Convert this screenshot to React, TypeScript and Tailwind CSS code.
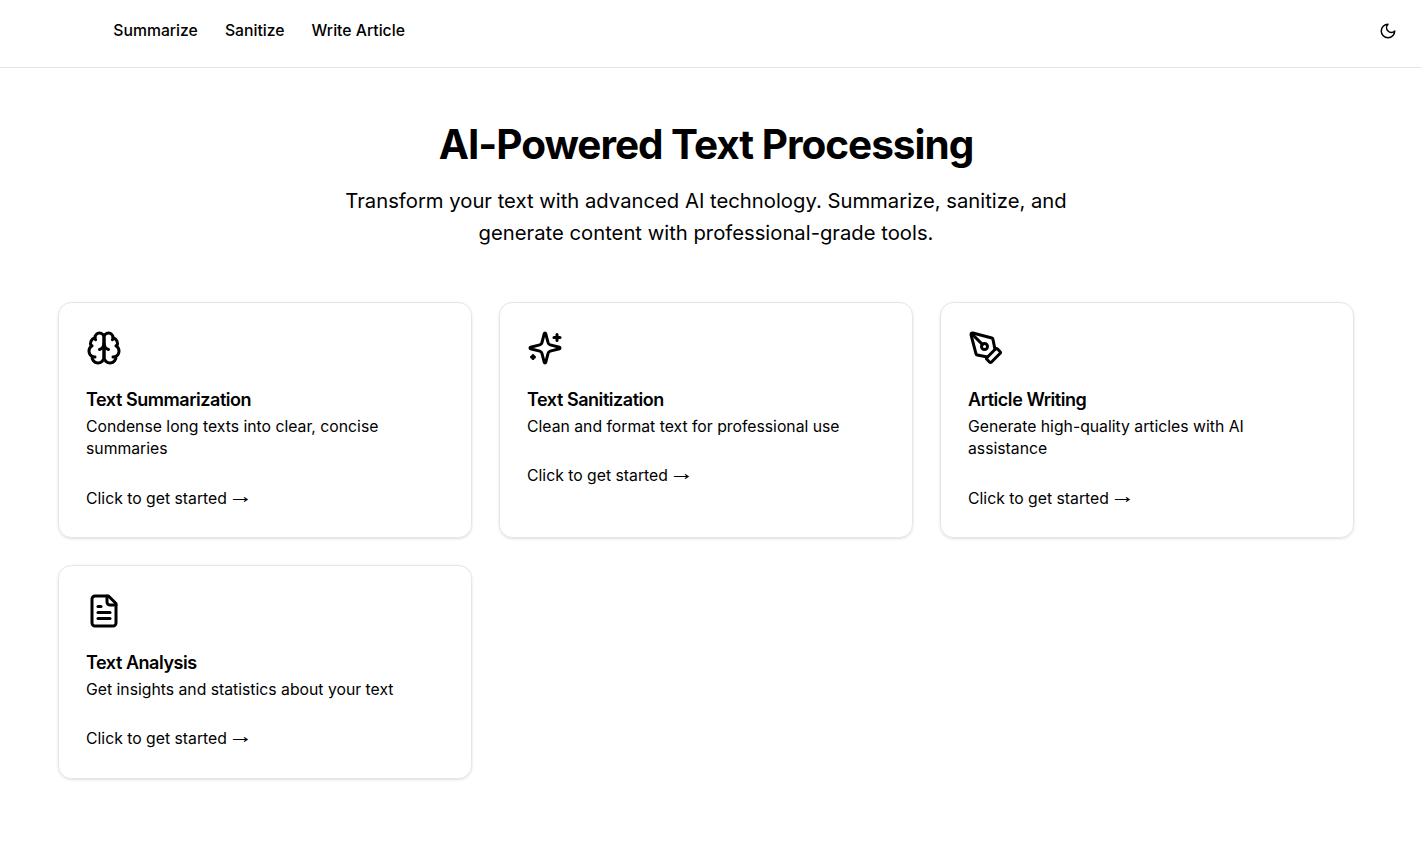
import React from "react";

const iconProps = {
  viewBox: "0 0 24 24",
  fill: "none",
  stroke: "currentColor",
  strokeWidth: 2,
  strokeLinecap: "round" as const,
  strokeLinejoin: "round" as const,
};

function BrainIcon({ className }: { className?: string }) {
  return (
    <svg {...iconProps} className={className}>
      <path d="M12 5a3 3 0 1 0-5.997.125 4 4 0 0 0-2.526 5.77 4 4 0 0 0 .556 6.588A4 4 0 1 0 12 18Z" />
      <path d="M12 5a3 3 0 1 1 5.997.125 4 4 0 0 1 2.526 5.77 4 4 0 0 1-.556 6.588A4 4 0 1 1 12 18Z" />
      <path d="M15 13a4.5 4.5 0 0 1-3-4 4.5 4.5 0 0 1-3 4" />
      <path d="M17.599 6.5a3 3 0 0 0 .399-1.375" />
      <path d="M6.003 5.125A3 3 0 0 0 6.401 6.5" />
      <path d="M3.477 10.896a4 4 0 0 1 .585-.396" />
      <path d="M19.938 10.5a4 4 0 0 1 .585.396" />
      <path d="M6 18a4 4 0 0 1-1.967-.516" />
      <path d="M19.967 17.484A4 4 0 0 1 18 18" />
    </svg>
  );
}

function SparklesIcon({ className }: { className?: string }) {
  return (
    <svg {...iconProps} className={className}>
      <path d="M9.937 15.5A2 2 0 0 0 8.5 14.063l-6.135-1.582a.5.5 0 0 1 0-.962L8.5 9.936A2 2 0 0 0 9.937 8.5l1.582-6.135a.5.5 0 0 1 .963 0L14.063 8.5A2 2 0 0 0 15.5 9.937l6.135 1.581a.5.5 0 0 1 0 .964L15.5 14.063a2 2 0 0 0-1.437 1.437l-1.582 6.135a.5.5 0 0 1-.963 0z" />
      <path d="M20 3v4" />
      <path d="M22 5h-4" />
      <path d="M4 17v2" />
      <path d="M5 18H3" />
    </svg>
  );
}

function PenToolIcon({ className }: { className?: string }) {
  return (
    <svg {...iconProps} className={className}>
      <path d="M15.707 21.293a1 1 0 0 1-1.414 0l-1.586-1.586a1 1 0 0 1 0-1.414l5.586-5.586a1 1 0 0 1 1.414 0l1.586 1.586a1 1 0 0 1 0 1.414z" />
      <path d="m18 13-1.375-6.874a1 1 0 0 0-.746-.776L3.235 2.028a1 1 0 0 0-1.207 1.207L5.35 15.879a1 1 0 0 0 .776.746L13 18" />
      <path d="m2.3 2.3 7.286 7.286" />
      <circle cx="11" cy="11" r="2" />
    </svg>
  );
}

function FileTextIcon({ className }: { className?: string }) {
  return (
    <svg {...iconProps} className={className}>
      <path d="M15 2H6a2 2 0 0 0-2 2v16a2 2 0 0 0 2 2h12a2 2 0 0 0 2-2V7Z" />
      <path d="M14 2v4a2 2 0 0 0 2 2h4" />
      <path d="M10 9H8" />
      <path d="M16 13H8" />
      <path d="M16 17H8" />
    </svg>
  );
}

function MoonIcon({ className }: { className?: string }) {
  return (
    <svg {...iconProps} className={className}>
      <path d="M12 3a6 6 0 0 0 9 9 9 9 0 1 1-9-9Z" />
    </svg>
  );
}

const features = [
  { title: "Text Summarization", description: "Condense long texts into clear, concise summaries", Icon: BrainIcon },
  { title: "Text Sanitization", description: "Clean and format text for professional use", Icon: SparklesIcon },
  { title: "Article Writing", description: "Generate high-quality articles with AI assistance", Icon: PenToolIcon },
  { title: "Text Analysis", description: "Get insights and statistics about your text", Icon: FileTextIcon },
];

export default function App() {
  return (
    <div className="min-h-screen bg-white font-['Inter',sans-serif] text-black">
      <header className="flex h-[68px] items-start justify-between border-b border-[#e5e5e5] pr-6 pl-[113.25px]">
        <nav className="flex gap-[27px] pt-5 text-[15.75px] leading-[22.5px] font-medium">
          <a href="#">Summarize</a>
          <a href="#">Sanitize</a>
          <a href="#">Write Article</a>
        </nav>
        <button aria-label="Toggle theme" className="pt-[22px]">
          <MoonIcon className="size-[18px]" />
        </button>
      </header>
      <main className="ml-[58px] w-[1296px] pt-[54px]">
        <section className="mb-[54px] text-center">
          <h1 className="mb-[18px] text-[40.5px] leading-[45px] font-bold tracking-[-0.025em]">AI-Powered Text Processing</h1>
          <p className="mx-auto w-[756px] text-[20.25px] leading-[31.5px]">
            Transform your text with advanced AI technology. Summarize, sanitize, and generate content with professional-grade tools.
          </p>
        </section>
        <section className="grid grid-cols-3 gap-[27px]">
          {features.map(({ title, description, Icon }) => (
            <article key={title} className="rounded-[13.5px] border border-[#e5e5e5] p-[27px] shadow-[0_1px_3px_0_rgba(0,0,0,0.1),0_1px_2px_-1px_rgba(0,0,0,0.1)]">
              <Icon className="mb-[22.5px] size-9" />
              <h2 className="mb-[4.5px] text-[18px] leading-[22.5px] font-semibold tracking-[-0.025em]">{title}</h2>
              <p className="mb-[27px] text-[15.75px] leading-[22.5px]">{description}</p>
              <p className="h-[22.5px] text-[15.75px] leading-[22.5px]">
                Click to get started{" "}
                <span className="inline-block h-4 origin-center -translate-x-px -translate-y-px scale-x-120 font-['Liberation_Sans',sans-serif] text-[21px] leading-4">→</span>
              </p>
            </article>
          ))}
        </section>
      </main>
    </div>
  );
}
